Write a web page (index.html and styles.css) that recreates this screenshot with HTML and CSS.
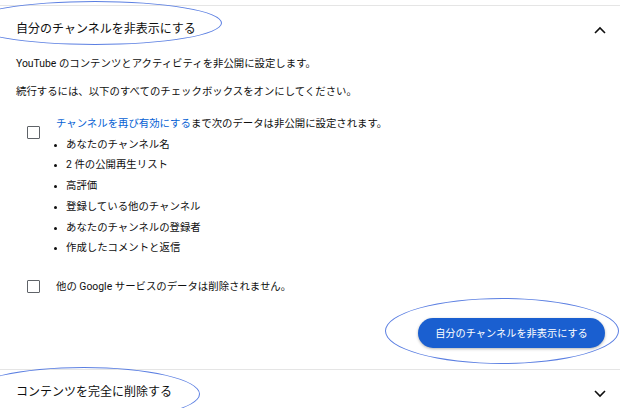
FILE: index.html
```html
<!DOCTYPE html>
<html lang="ja">
<head>
    <meta charset="UTF-8">
    <meta name="viewport" content="width=device-width, initial-scale=1.0">
    <title>自分のチャンネルを非表示にする</title>
    <link rel="stylesheet" href="styles.css">
</head>
<body>
    <div class="page">
        <section class="panel open">
            <header class="panel-head">
                <h2>自分のチャンネルを非表示にする</h2>
                <svg class="chevron" width="12" height="8" viewBox="0 0 12 8"><polyline points="1,7 6,2 11,7"/></svg>
            </header>
            <div class="panel-body">
                <p>YouTube のコンテンツとアクティビティを非公開に設定します。</p>
                <p>続行するには、以下のすべてのチェックボックスをオンにしてください。</p>
                <div class="check-row first">
                    <span class="checkbox"></span>
                    <div class="check-text">
                        <div><a href="#">チャンネルを再び有効にする</a>まで次のデータは非公開に設定されます。</div>
                        <ul>
                            <li>あなたのチャンネル名</li>
                            <li>2 件の公開再生リスト</li>
                            <li>高評価</li>
                            <li>登録している他のチャンネル</li>
                            <li>あなたのチャンネルの登録者</li>
                            <li>作成したコメントと返信</li>
                        </ul>
                    </div>
                </div>
                <div class="check-row second">
                    <span class="checkbox"></span>
                    <div class="check-text">他の Google サービスのデータは削除されません。</div>
                </div>
                <div class="actions">
                    <button class="btn">自分のチャンネルを非表示にする</button>
                </div>
            </div>
        </section>
        <section class="panel closed">
            <header class="panel-head">
                <h2>コンテンツを完全に削除する</h2>
                <svg class="chevron" width="12" height="8" viewBox="0 0 12 8"><polyline points="1,1 6,6 11,1"/></svg>
            </header>
        </section>

        <!-- hand-drawn highlight marks -->
        <div class="mark mark-title"></div>
        <div class="mark mark-button"></div>
        <div class="mark mark-delete"></div>
    </div>
</body>
</html>
```

FILE: styles.css
```css
:root {
    --text-color: #0f0f0f;
    --line-color: #e5e5e5;
    --link-color: #065fd4;
    --button-color: #1a5fd0;
    --mark-color: #5b7fe2;
}
body {
    margin: 0;
    font-family: Roboto, 'Noto Sans CJK JP', sans-serif;
    color: var(--text-color);
    background: #ffffff;
}
.page {
    position: relative;
    width: 620px;
    height: 408px;
    overflow: hidden;
    padding-top: 5px;
    box-sizing: border-box;
}
.panel {
    border-top: 1px solid var(--line-color);
}
.panel-head {
    display: flex;
    align-items: center;
    justify-content: space-between;
    height: 42px;
    padding: 0 14px 0 16px;
}
.panel-head h2 {
    margin: 0;
    font-size: 12px;
    font-weight: 400;
}
.chevron {
    fill: none;
    stroke: var(--text-color);
    stroke-width: 1.6;
}
.open .chevron {
    margin-top: 6px;
}
.closed .chevron {
    margin-top: 6px;
}
.panel-body {
    padding: 6px 16px 21px;
    font-size: 10.4px;
}
.panel-body p {
    margin: 0 0 8px;
    line-height: 20px;
}
.check-row {
    display: flex;
    padding-left: 11px;
}
.check-row.first {
    margin-top: 19px;
}
.check-row.second {
    margin-top: 18px;
    align-items: center;
    line-height: 20px;
}
.checkbox {
    flex: none;
    width: 11px;
    height: 11px;
    border: 1.5px solid #5f6368;
    border-radius: 1px;
    margin-right: 16px;
}
.check-row.first .checkbox {
    margin-top: 5px;
}
.check-row.first .check-text {
    line-height: 20.7px;
    margin-top: -7px;
}
.check-text a {
    color: var(--link-color);
    text-decoration: none;
}
.check-text ul {
    margin: 0;
    padding-left: 10px;
}
.check-text li::marker {
    font-size: 9px;
}
.actions {
    display: flex;
    justify-content: flex-end;
    margin-top: 21px;
}
.btn {
    font-family: inherit;
    font-size: 10.2px;
    color: #ffffff;
    background: var(--button-color);
    border: none;
    border-radius: 16px;
    height: 30px;
    width: 187px;
    box-shadow: 0 1px 3px rgba(0, 0, 0, 0.3);
    margin-right: -1px;
}
.mark {
    position: absolute;
    border: 1.6px solid var(--mark-color);
    border-radius: 50%;
}
.mark-title {
    left: -32px;
    top: 1px;
    width: 252px;
    height: 42px;
}
.mark-button {
    left: 385px;
    top: 298px;
    width: 232px;
    height: 64px;
}
.mark-delete {
    left: -32px;
    top: 367px;
    width: 230px;
    height: 52px;
}
```
